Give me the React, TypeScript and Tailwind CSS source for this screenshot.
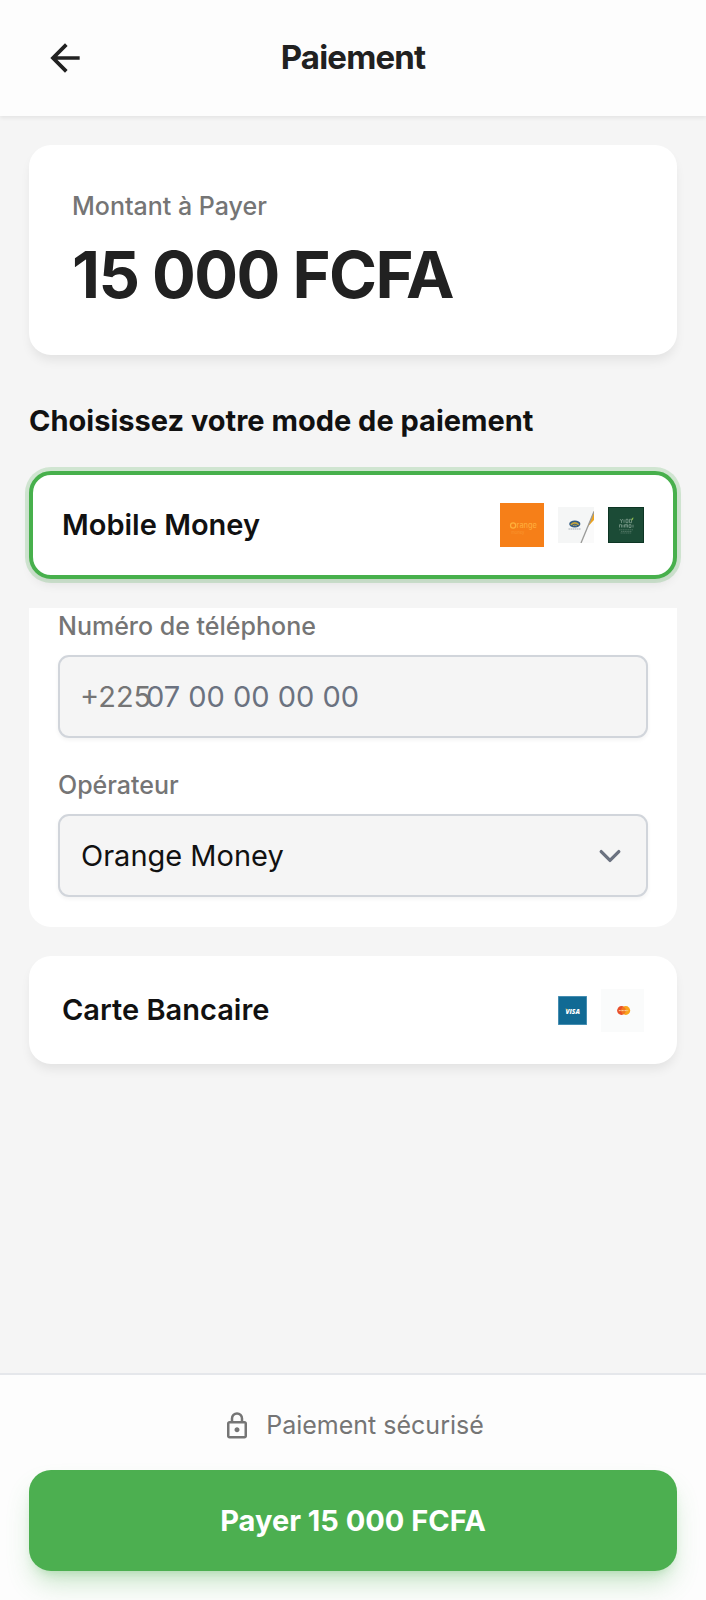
import { useState } from "react";

function BackIcon() {
  return (
    <svg viewBox="0 0 24 24" className="size-11" fill="currentColor" aria-hidden="true">
      <path d="m7.825 13 5.6 5.6L12 20l-8-8 8-8 1.425 1.4-5.6 5.6H20v2z" />
    </svg>
  );
}

function LockIcon() {
  return (
    <svg viewBox="0 0 24 24" className="size-[30px]" fill="currentColor" aria-hidden="true">
      <path d="M6 22q-.825 0-1.412-.587Q4 20.825 4 20V10q0-.825.588-1.413Q5.175 8 6 8h1V6q0-2.075 1.463-3.538Q9.925 1 12 1t3.538 1.462Q17 3.925 17 6v2h1q.825 0 1.413.587Q20 9.175 20 10v10q0 .825-.587 1.413Q18.825 22 18 22Zm0-2h12V10H6v10Zm6-3q.825 0 1.413-.587Q14 15.825 14 15q0-.825-.587-1.413Q12.825 13 12 13q-.825 0-1.412.587Q10 14.175 10 15q0 .825.588 1.413Q11.175 17 12 17ZM9 8h6V6q0-1.25-.875-2.125T12 3q-1.25 0-2.125.875T9 6Z" />
    </svg>
  );
}

function OrangeLogo() {
  return (
    <svg viewBox="0 0 43 43" className="size-11" role="img" aria-label="Orange Money">
      <rect width="43" height="43" fill="#f67f18" />
      <circle cx="12.8" cy="22" r="2.5" fill="none" stroke="#ffb13b" strokeWidth="1.2" />
      <text x="16.2" y="24.7" fontSize="7.2" fontWeight="500" fill="#ffab3a" fontFamily="Inter, sans-serif">range</text>
      <text x="11" y="30" fontSize="4" fill="#fa962f" fontFamily="Inter, sans-serif">money</text>
    </svg>
  );
}

function MtnLogo() {
  return (
    <svg viewBox="0 0 36 36" className="size-9" role="img" aria-label="MTN Money">
      <rect width="36" height="36" fill="#f5f6f6" />
      <path d="M36 7v29H24z" fill="#fafafa" />
      <path d="M36 4v9l-6.5 7z" fill="#eda31e" />
      <path d="M36 4.5 23 36" stroke="#9a9a98" strokeWidth="1.3" />
      <ellipse cx="16.8" cy="17" rx="5.6" ry="3.4" fill="#315b84" />
      <path d="M12.8 17.8q4-3.8 8 0" fill="none" stroke="#c6a63c" strokeWidth="1.5" />
      <path d="M14.8 18.8q2-1.4 4 0" fill="none" stroke="#d0b14d" strokeWidth=".8" />
      <path d="M10.5 22h12.5" stroke="#a8afb5" strokeWidth="1.1" strokeDasharray="1.6 .5" />
    </svg>
  );
}

function MoovLogo() {
  return (
    <svg viewBox="0 0 36 36" className="size-9" role="img" aria-label="Moov Money">
      <rect width="36" height="36" fill="#0d3524" />
      <rect x="1" y="1" width="34" height="34" fill="#1b4b36" />
      <g fill="none" stroke="#8aa898" strokeWidth=".7">
        <path d="m12 12 1.5 2 1.2-2M13.5 14v2M16 12.5v3.3M18 12.3h2v3.4h-2zM21.5 12.3h2v3.4h-2z" />
        <path d="M11.5 20.5v-2.8h2v2.8M15 20.5v-2.8M16.5 20.5v-2.8h3v2.8M18 17.7v2.8M21 17.7h2v2.8h-2zM25 17.7v2.8" />
      </g>
      <path d="M23.3 13.5q0-2.5 2-3.2.3 3-2 3.2z" fill="#8cba4b" />
      <path d="M11 22.8h14M13 24.5h10.5M12.5 26h11" stroke="#5f8170" strokeWidth=".7" strokeDasharray="1.4 .4" />
    </svg>
  );
}

function VisaLogo() {
  return (
    <svg viewBox="0 0 29 29" className="size-[29px]" role="img" aria-label="Visa">
      <rect width="29" height="29" fill="#5c9dbd" />
      <rect x=".7" y=".7" width="27.6" height="27.6" fill="#116a94" />
      <text x="7.4" y="17.6" fontSize="6.6" fontWeight="800" fontStyle="italic" fill="#fff" fontFamily="'Open Sans', sans-serif">VISA</text>
      <path d="m7.3 12.6 2 .3.7 2z" fill="#e3b64e" />
    </svg>
  );
}

function MastercardLogo() {
  return (
    <svg viewBox="0 0 43 43" className="size-[43px]" role="img" aria-label="Mastercard">
      <rect width="43" height="43" fill="#fafbfb" />
      <circle cx="20.5" cy="21.5" r="4.4" fill="#e8502a" />
      <circle cx="24.8" cy="21.5" r="4.4" fill="#f9a51c" />
      <path d="M22.6 17.7a4.4 4.4 0 0 1 0 7.6 4.4 4.4 0 0 1 0-7.6z" fill="#f27622" />
      <path d="M17.8 21.6h9.4" stroke="#fbd0a5" strokeWidth="1" strokeDasharray="1.2 .3" />
    </svg>
  );
}

type MethodProps = {
  label: string;
  selected: boolean;
  onSelect: () => void;
  children: React.ReactNode;
};

function PaymentMethod({ label, selected, onSelect, children }: MethodProps) {
  return (
    <button
      type="button"
      aria-pressed={selected}
      onClick={onSelect}
      className={
        selected
          ? "flex h-27 w-full items-center justify-between rounded-[22px] border-4 border-[#47b04c] bg-white px-[29px] shadow-[0_0_0_4px_#4caf5038,0_7px_11px_-2px_#00000014]"
          : "flex h-27 w-full items-center justify-between rounded-[22px] border-4 border-transparent bg-white px-[29px] shadow-[0_7px_11px_-2px_#00000014]"
      }
    >
      <span className="text-[29px] leading-11 font-semibold">{label}</span>
      <span className="flex items-center gap-3.5">{children}</span>
    </button>
  );
}

export default function App() {
  const [method, setMethod] = useState("mobile");

  return (
    <div className="flex min-h-screen flex-col bg-[#f5f5f5] font-['Inter',sans-serif] text-[#111111] [font-optical-sizing:none]">
      <header className="grid h-29 grid-cols-[72px_1fr_72px] items-center bg-[#fdfdfd] px-[29px] shadow-[0_2px_4px_#00000012]">
        <button type="button" aria-label="Retour" className="flex size-18 items-center justify-center text-[#212121]">
          <BackIcon />
        </button>
        <h1 className="pb-0.5 text-center text-[33px] leading-11 font-bold tracking-tight text-[#212121]">Paiement</h1>
      </header>

      <main className="flex flex-1 flex-col px-[29px] pt-[29px]">
        <section className="rounded-[22px] bg-white p-[43px] shadow-[0_7px_11px_-2px_#00000014]">
          <p className="text-[25px] leading-9 font-medium text-[#757575]">Montant à Payer</p>
          <p className="mt-3.5 text-[65px] leading-[74px] font-bold tracking-tight text-[#212121]">15 000 FCFA</p>
        </section>

        <h2 className="mt-11 text-[29px] leading-11 font-bold">Choisissez votre mode de paiement</h2>

        <div className="mt-7 flex flex-col gap-[29px]">
          <PaymentMethod label="Mobile Money" selected={method === "mobile"} onSelect={() => setMethod("mobile")}>
            <OrangeLogo />
            <MtnLogo />
            <MoovLogo />
          </PaymentMethod>

          {method === "mobile" && (
            <div className="flex flex-col gap-[29px] rounded-b-[22px] bg-white px-[29px] pb-[30px]">
              <div>
                <label htmlFor="phone" className="block text-[25px] leading-9 font-medium text-[#757575]">
                  Numéro de téléphone
                </label>
                <div className="relative mt-[11px]">
                  <span className="pointer-events-none absolute inset-y-0 left-0 flex items-center pl-[22px] text-[29px] text-[#757575]">
                    +225
                  </span>
                  <input
                    id="phone"
                    type="tel"
                    placeholder="07 00 00 00 00"
                    className="block h-[83px] w-full rounded-[11px] border-2 border-[#d1d5db] bg-[#f5f5f5] pr-5 pl-[86px] text-[29px] shadow-[0_2px_4px_#0000000d] placeholder:text-[#6b7280]"
                  />
                </div>
              </div>
              <div>
                <label htmlFor="operator" className="block text-[25px] leading-9 font-medium text-[#757575]">
                  Opérateur
                </label>
                <div className="relative mt-[11px]">
                  <select
                    id="operator"
                    className="block h-[83px] w-full appearance-none rounded-[11px] border-2 border-[#d1d5db] bg-[#f5f5f5] pr-16 pl-[21px] text-[29px] shadow-[0_2px_4px_#0000000d]"
                  >
                    <option>Orange Money</option>
                    <option>MTN Money</option>
                    <option>Moov Money</option>
                  </select>
                  <svg
                    viewBox="0 0 20 20"
                    className="pointer-events-none absolute inset-y-0 right-4 my-auto size-11"
                    fill="none"
                    stroke="#6b7280"
                    strokeWidth="1.5"
                    strokeLinecap="round"
                    strokeLinejoin="round"
                    aria-hidden="true"
                  >
                    <path d="m6 8 4 4 4-4" />
                  </svg>
                </div>
              </div>
            </div>
          )}

          <PaymentMethod label="Carte Bancaire" selected={method === "card"} onSelect={() => setMethod("card")}>
            <VisaLogo />
            <MastercardLogo />
          </PaymentMethod>
        </div>
      </main>

      <footer className="border-t-2 border-[#e5e7eb] bg-[#fdfdfd] p-[29px]">
        <p className="flex h-11 items-center justify-center gap-3.5 text-[25px] text-[#757575]">
          <LockIcon />
          Paiement sécurisé
        </p>
        <button
          type="submit"
          className="mt-[22px] h-[101px] w-full rounded-[22px] bg-[#4caf50] text-[29px] font-bold text-white shadow-[0_16px_27px_-5px_#4caf504d,0_7px_11px_-6px_#4caf504d]"
        >
          Payer 15 000 FCFA
        </button>
      </footer>
    </div>
  );
}
